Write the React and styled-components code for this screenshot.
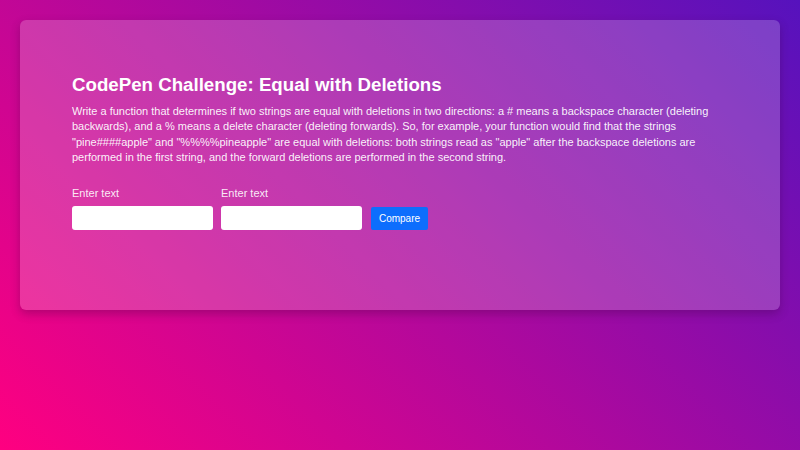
import React from "react";
import styled, { createGlobalStyle } from "styled-components";

const Global = createGlobalStyle`
  html, body { margin: 0; padding: 0; height: 100%; }
  body {
    font-family: "Liberation Sans", Arial, sans-serif;
    background: linear-gradient(45deg, #ff0080 0%, #5612bd 100%);
    min-height: 450px;
    color: #fff;
  }
  #root { padding: 20px; }
`;

const Card = styled.section`
  background: rgba(255, 255, 255, 0.2);
  border-radius: 6px;
  box-shadow: 0 4px 10px rgba(60, 0, 60, 0.3);
  padding: 54px 52px 0;
  height: 290px;
  box-sizing: border-box;
`;

const Title = styled.h1`
  margin: 0 0 8px;
  font-size: 18.7px;
  font-weight: bold;
  line-height: 22px;
`;

const Text = styled.p`
  margin: 0 0 22px;
  font-size: 11px;
  line-height: 15.3px;
  color: rgba(255, 255, 255, 0.95);
`;

const Row = styled.div`
  display: flex;
  align-items: flex-end;
  gap: 8px;
`;

const Field = styled.label`
  display: flex;
  flex-direction: column;
  gap: 7px;
  font-size: 11px;
  color: rgba(255, 255, 255, 0.9);
`;

const Input = styled.input`
  width: 141px;
  height: 24px;
  box-sizing: border-box;
  border: none;
  border-radius: 3px;
  background: #fff;
  padding: 0 6px;
  font: inherit;
`;

const Button = styled.button`
  height: 23px;
  width: 57px;
  padding: 0;
  margin-left: 1px;
  border: none;
  border-radius: 2px;
  background: #0d6efd;
  color: #fff;
  font-family: "Liberation Sans", Arial, sans-serif;
  font-size: 10px;
  cursor: pointer;
`;

export default function App() {
  return (
    <>
      <Global />
      <Card>
        <Title>CodePen Challenge: Equal with Deletions</Title>
        <Text>
          Write a function that determines if two strings are equal with deletions in two directions: a # means a backspace character (deleting backwards), and a % means a delete character (deleting forwards). So, for example, your function would find that the strings "pine####apple" and "%%%%pineapple" are equal with deletions: both strings read as "apple" after the backspace deletions are performed in the first string, and the forward deletions are performed in the second string.
        </Text>
        <Row>
          <Field>
            Enter text
            <Input type="text" />
          </Field>
          <Field>
            Enter text
            <Input type="text" />
          </Field>
          <Button>Compare</Button>
        </Row>
      </Card>
    </>
  );
}
